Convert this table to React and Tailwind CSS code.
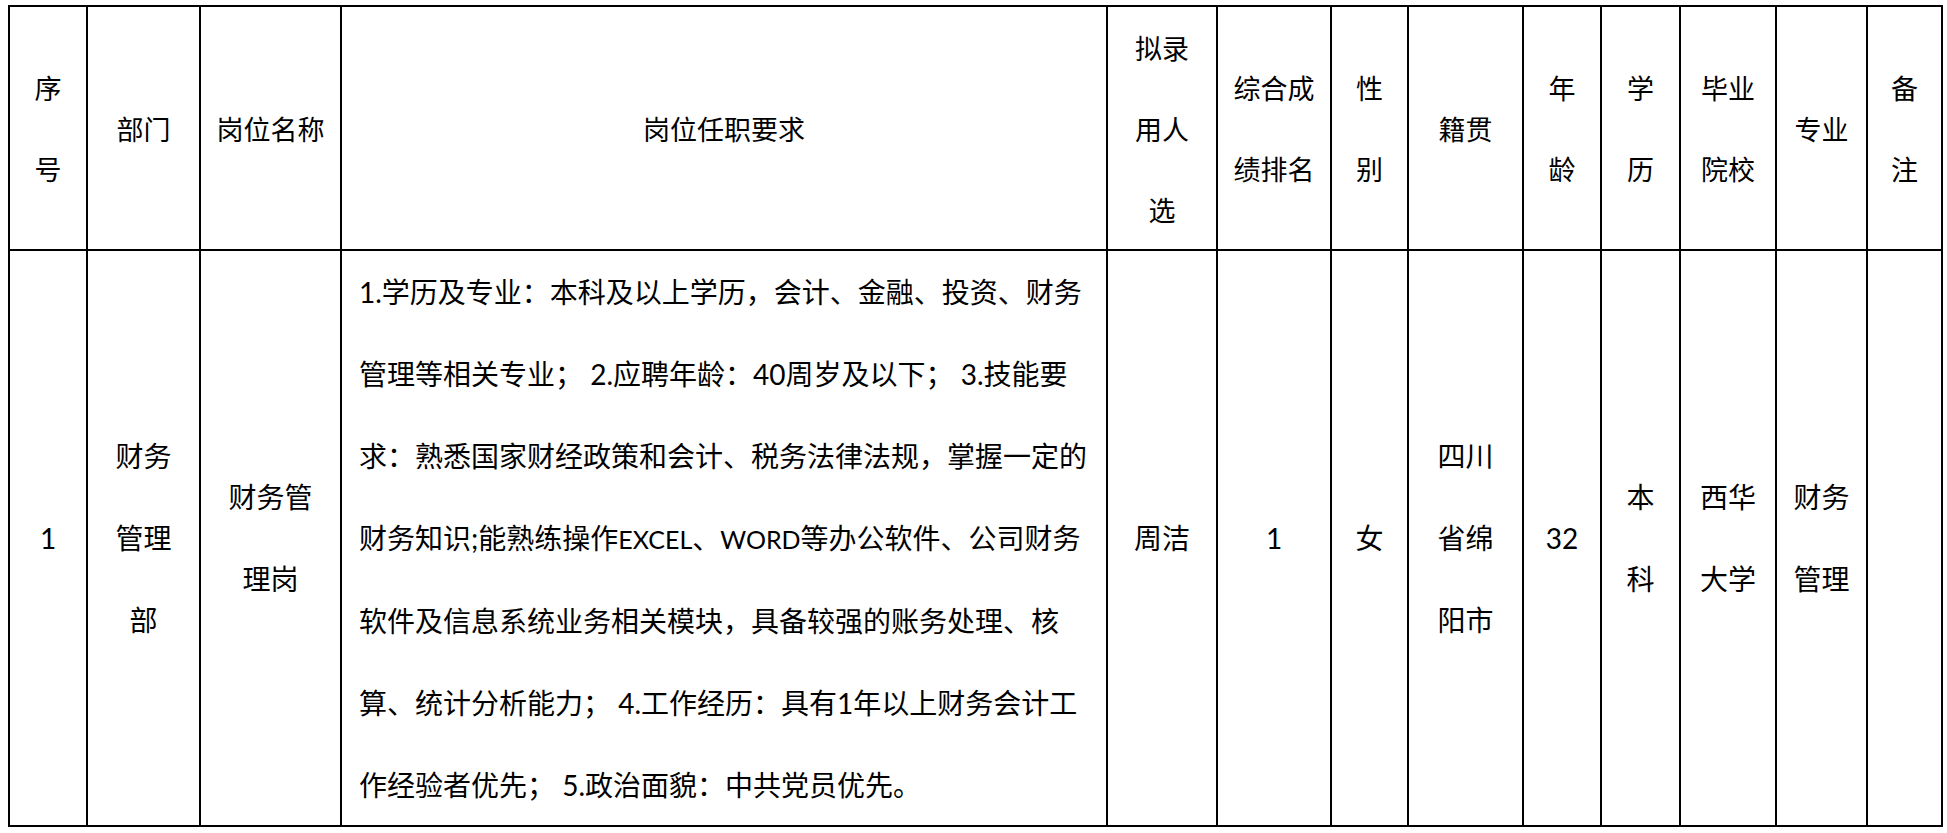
const headers = [
  ["序", "号"],
  ["部门"],
  ["岗位名称"],
  ["岗位任职要求"],
  ["拟录", "用人", "选"],
  ["综合成", "绩排名"],
  ["性", "别"],
  ["籍贯"],
  ["年", "龄"],
  ["学", "历"],
  ["毕业", "院校"],
  ["专业"],
  ["备", "注"],
];

const requirements = [
  "1.学历及专业：本科及以上学历，会计、金融、投资、财务",
  "管理等相关专业； 2.应聘年龄：40周岁及以下； 3.技能要",
  "求：熟悉国家财经政策和会计、税务法律法规，掌握一定的",
  <>
    财务知识;能熟练操作<span className="text-[25px]">EXCEL</span>、
    <span className="text-[25px]">WORD</span>等办公软件、公司财务
  </>,
  "软件及信息系统业务相关模块，具备较强的账务处理、核",
  "算、统计分析能力； 4.工作经历：具有1年以上财务会计工",
  "作经验者优先； 5.政治面貌：中共党员优先。",
];

const row = [
  ["1"],
  ["财务", "管理", "部"],
  ["财务管", "理岗"],
  null,
  ["周洁"],
  ["1"],
  ["女"],
  ["四川", "省绵", "阳市"],
  ["32"],
  ["本", "科"],
  ["西华", "大学"],
  ["财务", "管理"],
  [],
];

function Lines({ lines }) {
  return lines.map((line, i) => (
    <span key={i} className="block whitespace-nowrap">
      {line}
    </span>
  ));
}

export default function App() {
  return (
    <div className="min-h-screen bg-white pt-[5px] pl-[8px] text-black font-['Lato','Noto_Sans_CJK_SC',sans-serif]">
      <div className="grid w-fit grid-cols-[76px_111px_139px_764px_108px_112px_75px_113px_76px_77px_94px_89px_73px] grid-rows-[242px_574px] gap-[2px] bg-black p-[2px]">
        {headers.map((lines, i) => (
          <div
            key={"h" + i}
            className="flex flex-col items-center justify-center bg-white text-center text-[27px] leading-[81px] font-['Noto_Sans_CJK_SC',sans-serif]"
          >
            <Lines lines={lines} />
          </div>
        ))}
        {row.map((lines, i) =>
          lines === null ? (
            <div
              key={"b" + i}
              className="flex flex-col items-start justify-center bg-white pl-[17px] text-[28px] leading-[82px]"
            >
              <Lines lines={requirements} />
            </div>
          ) : (
            <div
              key={"b" + i}
              className="flex flex-col items-center justify-center bg-white text-center text-[28px] leading-[82px]"
            >
              <Lines lines={lines} />
            </div>
          )
        )}
      </div>
    </div>
  );
}
